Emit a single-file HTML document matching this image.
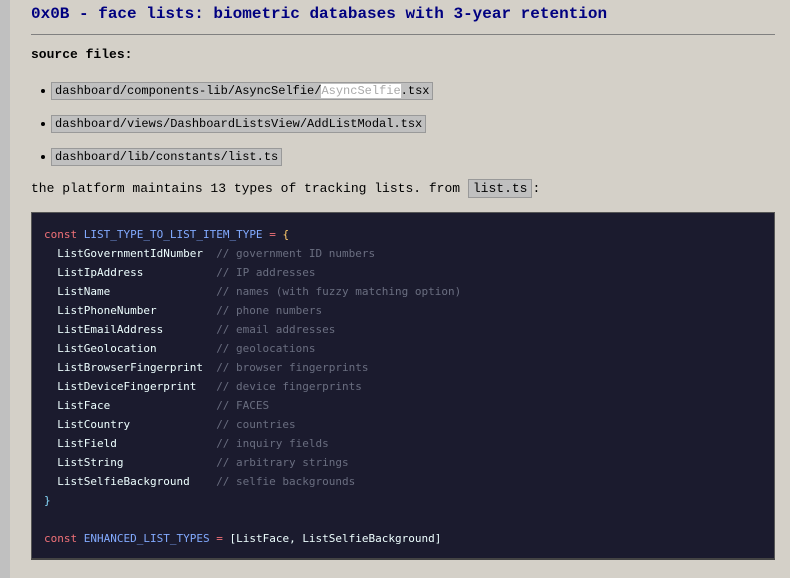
<!DOCTYPE html>
<html><head><meta charset="utf-8"><style>
html,body{margin:0;padding:0;}
body{width:790px;height:578px;background:#d4d0c8;position:relative;overflow:hidden;font-family:"Liberation Mono",monospace;}
.strip{position:absolute;left:0;top:0;width:10px;height:578px;background:#c0c0c0;}
.main{position:absolute;left:31px;top:0;width:744px;}
h1{margin:0;position:absolute;top:5px;left:0;font-size:16px;font-weight:bold;color:#000080;white-space:nowrap;font-family:"Liberation Mono",monospace;}
.hr{position:absolute;top:34px;left:0;width:744px;height:1px;background:#808080;}
.src{position:absolute;top:47px;left:0;font-size:13px;font-weight:bold;}
ul{position:absolute;left:0;top:82px;margin:0;padding:0;list-style:none;}
li{position:relative;height:33px;font-size:12px;}
li:before{content:"";position:absolute;left:10px;top:7px;width:4px;height:4px;border-radius:2px;background:#000;}
code{font-family:"Liberation Mono",monospace;}
code.f{position:absolute;left:20px;top:0;background:#c0c0c0;border:1px solid #999;padding:1px 3px;white-space:nowrap;line-height:14px;font-size:12px;}
.hl{background:#fff;color:#aaa;}
.p{position:absolute;top:181px;left:0;font-size:13px;white-space:pre;}
.p code{background:#c0c0c0;border:1px solid #999;padding:1px 4px;font-size:13px;}
.code{position:absolute;left:31px;top:212px;width:744px;height:348px;background:#1b1b2e;border:1px solid #555;border-bottom:2px solid #444;font-family:"DejaVu Sans Mono",monospace;font-size:11px;line-height:19px;color:#eeffff;padding-top:12px;box-sizing:border-box;}
pre{margin:0 0 0 12px;font:inherit;}
.k{color:#f07178}.v{color:#82aaff}.y{color:#ffcb6b}.c{color:#6a6e80}.b{color:#89ddff}
</style></head><body>
<div class="strip"></div>
<div class="main">
<h1>0x0B - face lists: biometric databases with 3-year retention</h1>
<div class="hr"></div>
<div class="src">source files:</div>
<ul>
<li><code class="f">dashboard/components-lib/AsyncSelfie/<span class="hl">AsyncSelfie</span>.tsx</code></li>
<li><code class="f">dashboard/views/DashboardListsView/AddListModal.tsx</code></li>
<li><code class="f">dashboard/lib/constants/list.ts</code></li>
</ul>
<div class="p">the platform maintains 13 types of tracking lists. from <code>list.ts</code>:</div>
</div>
<div class="code"><pre><span class="k">const</span> <span class="v">LIST_TYPE_TO_LIST_ITEM_TYPE</span> <span class="k">=</span> <span class="y">{</span>
  ListGovernmentIdNumber  <span class="c">// government ID numbers</span>
  ListIpAddress           <span class="c">// IP addresses</span>
  ListName                <span class="c">// names (with fuzzy matching option)</span>
  ListPhoneNumber         <span class="c">// phone numbers</span>
  ListEmailAddress        <span class="c">// email addresses</span>
  ListGeolocation         <span class="c">// geolocations</span>
  ListBrowserFingerprint  <span class="c">// browser fingerprints</span>
  ListDeviceFingerprint   <span class="c">// device fingerprints</span>
  ListFace                <span class="c">// FACES</span>
  ListCountry             <span class="c">// countries</span>
  ListField               <span class="c">// inquiry fields</span>
  ListString              <span class="c">// arbitrary strings</span>
  ListSelfieBackground    <span class="c">// selfie backgrounds</span>
<span class="b">}</span>

<span class="k">const</span> <span class="v">ENHANCED_LIST_TYPES</span> <span class="k">=</span> [ListFace, ListSelfieBackground]</pre></div>
</body></html>
